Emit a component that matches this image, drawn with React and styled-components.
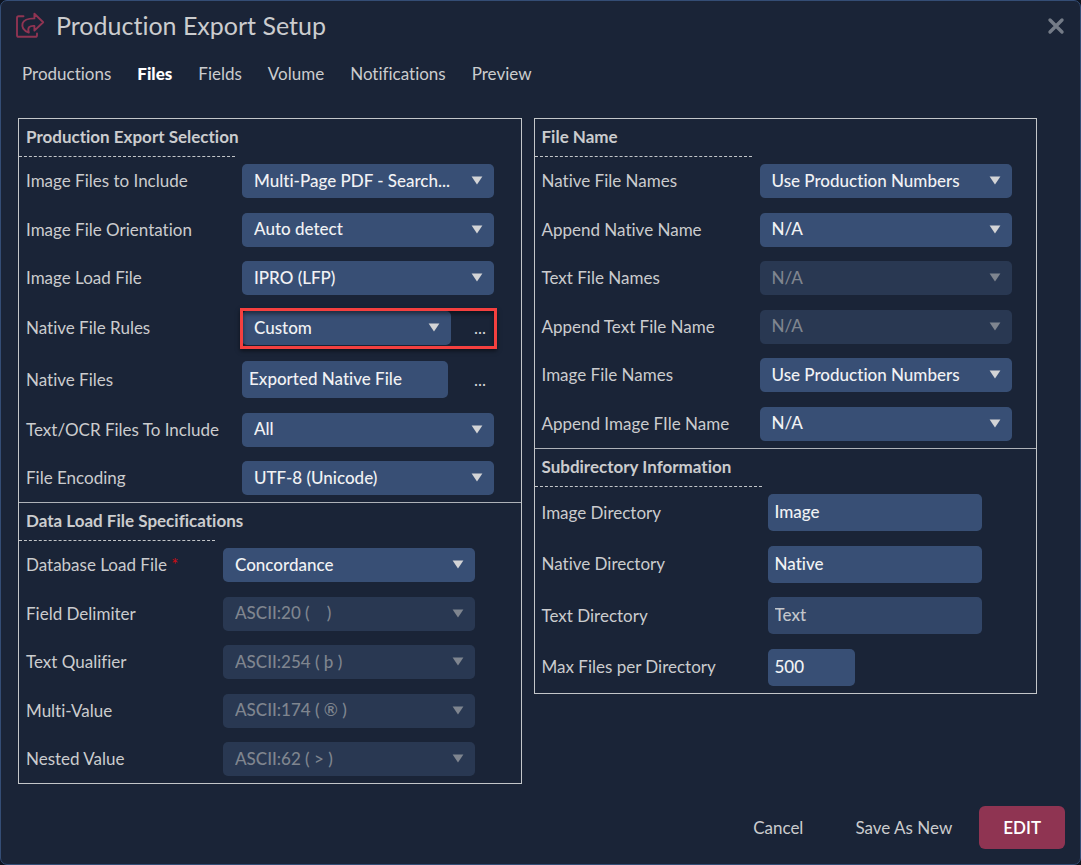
import React from "react";
import styled, { createGlobalStyle } from "styled-components";

const Global = createGlobalStyle`
  *, *::before, *::after { box-sizing: border-box; }
  body { margin: 0; background: #0e1420; }
  body, button, input, select {
    font-family: Lato, "Open Sans", sans-serif;
    font-variant-ligatures: none;
  }
`;

const Dialog = styled.main`
  display: flex;
  flex-direction: column;
  min-height: 100vh;
  background: #1a2437;
  border: 1px solid #344d75;
  border-radius: 7px;
  color: #cbccce;
  font-size: 17px;
  line-height: 24px;
`;

const Header = styled.header`
  display: flex;
  align-items: center;
  gap: 11px;
  height: 50px;
  padding: 0 13px 0 14px;
`;

const Title = styled.h1`
  flex: 1;
  margin: 0;
  padding-bottom: 2px;
  font-size: 25px;
  font-weight: 400;
  line-height: 32px;
`;

const CloseButton = styled.button`
  display: flex;
  padding: 2px;
  border: 0;
  background: none;
  color: #747b87;
  cursor: pointer;
`;

const Tabs = styled.nav`
  display: flex;
  gap: 26px;
  height: 46px;
  padding: 0 21px;
  align-items: center;
`;

const Tab = styled.a`
  color: ${(p) => (p.$active ? "#ffffff" : "#cbccce")};
  font-weight: ${(p) => (p.$active ? 900 : 400)};
  text-decoration: none;
`;

const Panels = styled.div`
  display: grid;
  grid-template-columns: 1fr 1fr;
  align-items: start;
  gap: 12px;
  padding: 21px 43px 0 17px;
`;

const Panel = styled.div`
  border: 1px solid #c3c6c9;
`;

const Section = styled.section`
  & + & { border-top: 1px solid #aeb2b8; }
`;

const SectionTitle = styled.h2`
  margin: 0;
  padding: 6px 7px 7px;
  font-size: 17px;
  font-weight: 700;
  line-height: 24px;
`;

const Divider = styled.div`
  width: ${(p) => p.$width}px;
  border-top: 1px dashed #c3c6c9;
`;

const Row = styled.div`
  display: grid;
  grid-template-columns: ${(p) => p.$label}px 1fr;
  align-items: center;
  min-height: ${(p) => (p.$tall ? 51 : 48)}px;
  padding-left: 7px;
  &:nth-child(even) { min-height: ${(p) => (p.$tall ? 52 : 49)}px; }
`;

const Required = styled.span`
  color: #d00c14;
`;

const SelectBox = styled.div`
  position: relative;
  width: ${(p) => p.$width || 252}px;
  max-width: 100%;
  color: #d3d4d6;
`;

const Select = styled.select`
  display: block;
  width: 100%;
  height: 34px;
  padding: 0 36px 2px 12px;
  border: 0;
  border-radius: 5px;
  appearance: none;
  background: #384f75;
  color: #f1f2f4;
  font-size: 17px;
  font-weight: 500;
  opacity: 1;
  &:disabled { background: #293852; color: #7f858f; }
  &:disabled + svg { color: #7f858f; }
`;

const Arrow = styled.svg`
  position: absolute;
  top: 12px;
  right: 11px;
  pointer-events: none;
`;

const TextInput = styled.input`
  width: ${(p) => p.$width}px;
  height: 37px;
  padding: 0 7px 2px;
  border: 0;
  border-radius: 5px;
  background: #384f75;
  color: #f1f2f4;
  font-size: 17px;
  font-weight: 500;
  &:disabled { background: #324668; color: #c3c6cc; }
`;

const Pair = styled.div`
  position: relative;
  display: flex;
  align-items: center;
  justify-content: space-between;
  width: 253px;
  height: 37px;
`;

const Highlight = styled(Pair)`
  &::after {
    content: "";
    position: absolute;
    inset: -2px;
    border: 3px solid #f5403f;
    box-shadow: 0 2px 4px rgba(0, 0, 0, 0.5), inset 0 3px 4px rgba(0, 0, 0, 0.45);
    pointer-events: none;
  }
`;

const MoreButton = styled.button`
  padding: 0 9px;
  border: 0;
  background: none;
  color: #d3d4d6;
  font-size: 17px;
  line-height: 24px;
  cursor: pointer;
`;

const Footer = styled.footer`
  display: flex;
  align-items: center;
  justify-content: flex-end;
  gap: 2px;
  margin-top: auto;
  padding: 16px 15px 15px;
`;

const FooterButton = styled.button`
  height: 43px;
  padding: 0 ${(p) => (p.$primary ? 24 : 25)}px;
  border: 0;
  border-radius: 6px;
  background: ${(p) => (p.$primary ? "#8f3452" : "none")};
  color: ${(p) => (p.$primary ? "#ffffff" : "#cbccce")};
  font-size: 17px;
  font-weight: ${(p) => (p.$primary ? 600 : 400)};
  cursor: pointer;
`;

function Dropdown({ id, value, width, disabled }) {
  return (
    <SelectBox $width={width}>
      <Select id={id} disabled={disabled} defaultValue={value}>
        <option>{value}</option>
      </Select>
      <Arrow width="12" height="9" viewBox="0 0 12 9" aria-hidden="true">
        <path d="M0.6 0.6H11.4L6 8.6Z" fill="currentColor" />
      </Arrow>
    </SelectBox>
  );
}

function Control({ id, field }) {
  if (field.type === "rules") {
    return (
      <Highlight>
        <Dropdown id={id} value={field.value} width={209} />
        <MoreButton type="button" aria-label="Edit native file rules">...</MoreButton>
      </Highlight>
    );
  }
  if (field.type === "path") {
    return (
      <Pair>
        <TextInput id={id} $width={206} defaultValue={field.value} />
        <MoreButton type="button" aria-label="Edit native files">...</MoreButton>
      </Pair>
    );
  }
  if (field.type === "text") {
    return <TextInput id={id} $width={field.width || 214} defaultValue={field.value} disabled={field.disabled} />;
  }
  return <Dropdown id={id} value={field.value} disabled={field.disabled} />;
}

function FieldSection({ title, rule, label, fields }) {
  return (
    <Section>
      <SectionTitle>{title}</SectionTitle>
      <Divider $width={rule} />
      <div>
        {fields.map((field) => {
          const id = field.label.toLowerCase().replace(/[^a-z]+/g, "-");
          return (
            <Row key={id} $label={label} $tall={Boolean(field.type)}>
              <label htmlFor={id}>
                {field.label}
                {field.required && <Required> *</Required>}
              </label>
              <Control id={id} field={field} />
            </Row>
          );
        })}
      </div>
    </Section>
  );
}

const exportFields = [
  { label: "Image Files to Include", value: "Multi-Page PDF - Search..." },
  { label: "Image File Orientation", value: "Auto detect" },
  { label: "Image Load File", value: "IPRO (LFP)" },
  { label: "Native File Rules", value: "Custom", type: "rules" },
  { label: "Native Files", value: "Exported Native File", type: "path" },
  { label: "Text/OCR Files To Include", value: "All" },
  { label: "File Encoding", value: "UTF-8 (Unicode)" },
];

const loadFields = [
  { label: "Database Load File", value: "Concordance", required: true },
  { label: "Field Delimiter", value: "ASCII:20 (\u00a0\u00a0\u00a0\u00a0)", disabled: true },
  { label: "Text Qualifier", value: "ASCII:254 ( þ )", disabled: true },
  { label: "Multi-Value", value: "ASCII:174 ( ® )", disabled: true },
  { label: "Nested Value", value: "ASCII:62 ( > )", disabled: true },
];

const nameFields = [
  { label: "Native File Names", value: "Use Production Numbers" },
  { label: "Append Native Name", value: "N/A" },
  { label: "Text File Names", value: "N/A", disabled: true },
  { label: "Append Text File Name", value: "N/A", disabled: true },
  { label: "Image File Names", value: "Use Production Numbers" },
  { label: "Append Image FIle Name", value: "N/A" },
];

const directoryFields = [
  { label: "Image Directory", value: "Image", type: "text" },
  { label: "Native Directory", value: "Native", type: "text" },
  { label: "Text Directory", value: "Text", type: "text", disabled: true },
  { label: "Max Files per Directory", value: "500", type: "text", width: 87 },
];

const tabs = ["Productions", "Files", "Fields", "Volume", "Notifications", "Preview"];

export default function App() {
  return (
    <>
      <Global />
      <Dialog>
        <Header>
          <svg width="30" height="28" viewBox="0 0 30 28" fill="none" stroke="#8f3452" strokeWidth="1.9" strokeLinejoin="round" strokeLinecap="round" aria-hidden="true">
            <path d="M8.5 4.3H3.6Q2 4.3 2 5.9V23.2Q2 24.8 3.6 24.8H20.4Q22 24.8 22 23.2V21.4" />
            <path d="M19.4 1.8L28.2 10.2L19.4 18.6V13.9C14.3 13.6 12.2 15.4 13.8 20.6C9.4 18.8 6.4 15.4 7.6 11.2C8.9 7.2 13.4 6.5 19.4 6.4Z" />
          </svg>
          <Title>Production Export Setup</Title>
          <CloseButton type="button" aria-label="Close">
            <svg width="18" height="18" viewBox="0 0 18 18" stroke="currentColor" strokeWidth="3.4" strokeLinecap="round" aria-hidden="true">
              <path d="M3 3L15 15M15 3L3 15" />
            </svg>
          </CloseButton>
        </Header>
        <Tabs>
          {tabs.map((tab) => (
            <Tab key={tab} href={"#" + tab.toLowerCase()} $active={tab === "Files"}>{tab}</Tab>
          ))}
        </Tabs>
        <Panels>
          <Panel>
            <FieldSection title="Production Export Selection" rule={216} label={216} fields={exportFields} />
            <FieldSection title="Data Load File Specifications" rule={196} label={197} fields={loadFields} />
          </Panel>
          <Panel>
            <FieldSection title="File Name" rule={217} label={218} fields={nameFields} />
            <FieldSection title="Subdirectory Information" rule={227} label={226} fields={directoryFields} />
          </Panel>
        </Panels>
        <Footer>
          <FooterButton type="button">Cancel</FooterButton>
          <FooterButton type="button">Save As New</FooterButton>
          <FooterButton type="button" $primary>EDIT</FooterButton>
        </Footer>
      </Dialog>
    </>
  );
}
